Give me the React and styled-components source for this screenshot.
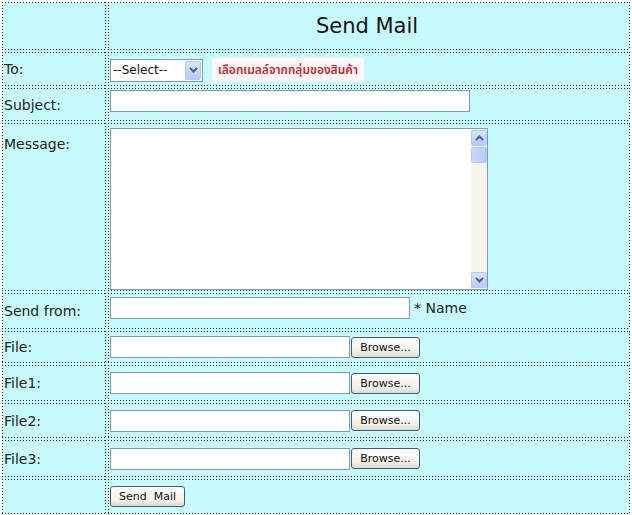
import React from 'react';
import styled, { createGlobalStyle } from 'styled-components';

const Global = createGlobalStyle`
  html, body {
    margin: 0;
    padding: 0;
    background: #fff;
  }
  body {
    font-family: 'DejaVu Sans', sans-serif;
    color: #222;
  }
`;

const dots = '#2a2a2a';

const Table = styled.div`
  margin: 2px 0 0 2px;
  width: 628px;
  display: grid;
  grid-template-columns: 104px 1fr;
  grid-template-rows: 48px 34px 33px 168px 36px 32px 36px 35px 37px 35px;
  gap: 2px;
  background: #c8fcfc;
`;

const Cell = styled.div`
  box-sizing: border-box;
  display: flex;
  align-items: ${p => p.$top ? 'flex-start' : 'center'};
  justify-content: ${p => p.$center ? 'center' : 'flex-start'};
  padding: ${p => p.$pad || '0 0 0 2px'};
  gap: 4px;
  min-width: 0;
  background:
    repeating-linear-gradient(90deg, ${dots} 0 1px, transparent 1px 3px) top left / 100% 1px no-repeat,
    repeating-linear-gradient(90deg, ${dots} 0 1px, transparent 1px 3px) bottom left / 100% 1px no-repeat,
    repeating-linear-gradient(180deg, ${dots} 0 1px, transparent 1px 3px) top left / 1px 100% no-repeat,
    repeating-linear-gradient(180deg, ${dots} 0 1px, transparent 1px 3px) top right / 1px 100% no-repeat;
`;

const Label = styled.span`
  font-size: 14px;
  color: #222;
  white-space: nowrap;
`;

const Title = styled.h1`
  margin: 0 0 0 -6px;
  font-family: 'DejaVu Sans', sans-serif;
  font-weight: normal;
  font-size: 21px;
  color: #111;
`;

const Field = styled.input`
  box-sizing: border-box;
  width: ${p => p.$w}px;
  height: ${p => p.$h || 22}px;
  margin: 0;
  border: 1px solid #7f9db9;
  background: #fff;
  padding: 0 3px;
  font-family: 'DejaVu Sans', sans-serif;
  font-size: 12px;
  outline: none;
`;

const SelectBox = styled.div`
  box-sizing: border-box;
  width: 93px;
  height: 23px;
  border: 1px solid #7f9db9;
  background: #fff;
  display: flex;
  align-items: center;
  justify-content: space-between;
  padding: 0 1px 0 2px;
  font-size: 12px;
  color: #111;
`;

const ArrowButton = styled.div`
  box-sizing: border-box;
  width: ${p => p.$w || 16}px;
  height: ${p => p.$h || 19}px;
  border: 1px solid #b6c9f4;
  border-radius: 2px;
  background: linear-gradient(#d6e3fd, #b7cbf8);
  display: flex;
  align-items: center;
  justify-content: center;
  flex-shrink: 0;
`;

const Hint = styled.span`
  margin-left: 5px;
  padding: 3px 6px;
  border-radius: 4px;
  background: #fff6f6;
  color: #c0282d;
  font-family: 'Noto Sans Thai', 'Tahoma', 'DejaVu Sans', sans-serif;
  font-size: 12px;
  font-weight: 600;
  white-space: nowrap;
`;

const MessageBox = styled.div`
  box-sizing: border-box;
  width: 378px;
  height: 162px;
  border: 1px solid #7f9db9;
  background: #fff;
  display: flex;
`;

const Area = styled.textarea`
  flex: 1;
  border: none;
  resize: none;
  outline: none;
  margin: 0;
  padding: 2px;
  font-family: 'DejaVu Sans', sans-serif;
  font-size: 12px;
`;

const Scroll = styled.div`
  width: 16px;
  background: #f4f3ee;
  display: flex;
  flex-direction: column;
  align-items: center;
  padding: 1px 0;
  gap: 1px;
`;

const Thumb = styled.div`
  box-sizing: border-box;
  width: 16px;
  height: 16px;
  border: 1px solid #b6c9f4;
  border-radius: 2px;
  background: linear-gradient(90deg, #c8d8fc, #b9ccf8);
`;

const Track = styled.div`
  flex: 1;
`;

const Note = styled.span`
  font-size: 14px;
  color: #222;
  white-space: nowrap;
`;

const Button = styled.button`
  box-sizing: border-box;
  height: ${p => p.$h || 21}px;
  width: ${p => p.$w}px;
  margin: 0;
  padding: 0;
  border: 1px solid #4a5a6e;
  border-radius: 3px;
  background: linear-gradient(#ffffff, #f1f0ea 70%, #dedbd0);
  font-family: 'DejaVu Sans', sans-serif;
  font-size: 11px;
  color: #111;
  white-space: pre;
`;

const Group = styled.div`
  display: flex;
  align-items: center;
  gap: ${p => p.$gap || 1}px;
`;

const Chevron = ({ up }) => (
  <svg width="9" height="6" viewBox="0 0 9 6">
    <path
      d={up ? 'M1 5 L4.5 1.5 L8 5' : 'M1 1 L4.5 4.5 L8 1'}
      fill="none"
      stroke="#4d6185"
      strokeWidth="2"
    />
  </svg>
);

const files = ['File:', 'File1:', 'File2:', 'File3:'];

export default function App() {
  return (
    <>
      <Global />
      <Table>
        <Cell />
        <Cell $center>
          <Title>Send Mail</Title>
        </Cell>

        <Cell><Label>To:</Label></Cell>
        <Cell $pad="2px 0 0 2px">
          <SelectBox>
            <span>--Select--</span>
            <ArrowButton>
              <Chevron />
            </ArrowButton>
          </SelectBox>
          <Hint>เลือกเมลล์จากกลุ่มของสินค้า</Hint>
        </Cell>

        <Cell><Label>Subject:</Label></Cell>
        <Cell $top $pad="2px 0 0 2px">
          <Field $w={360} />
        </Cell>

        <Cell $top $pad="13px 0 0 2px"><Label>Message:</Label></Cell>
        <Cell $top $pad="5px 0 0 2px">
          <MessageBox>
            <Area />
            <Scroll>
              <ArrowButton $w={16} $h={16}><Chevron up /></ArrowButton>
              <Thumb />
              <Track />
              <ArrowButton $w={16} $h={16}><Chevron /></ArrowButton>
            </Scroll>
          </MessageBox>
        </Cell>

        <Cell><Label>Send from:</Label></Cell>
        <Cell $top $pad="4px 0 0 2px">
          <Group $gap={4}>
            <Field $w={300} />
            <Note>* Name</Note>
          </Group>
        </Cell>

        {files.map(f => (
          <React.Fragment key={f}>
            <Cell><Label>{f}</Label></Cell>
            <Cell>
              <Group>
                <Field $w={240} />
                <Button $w={69}>Browse...</Button>
              </Group>
            </Cell>
          </React.Fragment>
        ))}

        <Cell />
        <Cell>
          <Button $w={75}>{'Send  Mail'}</Button>
        </Cell>
      </Table>
    </>
  );
}
